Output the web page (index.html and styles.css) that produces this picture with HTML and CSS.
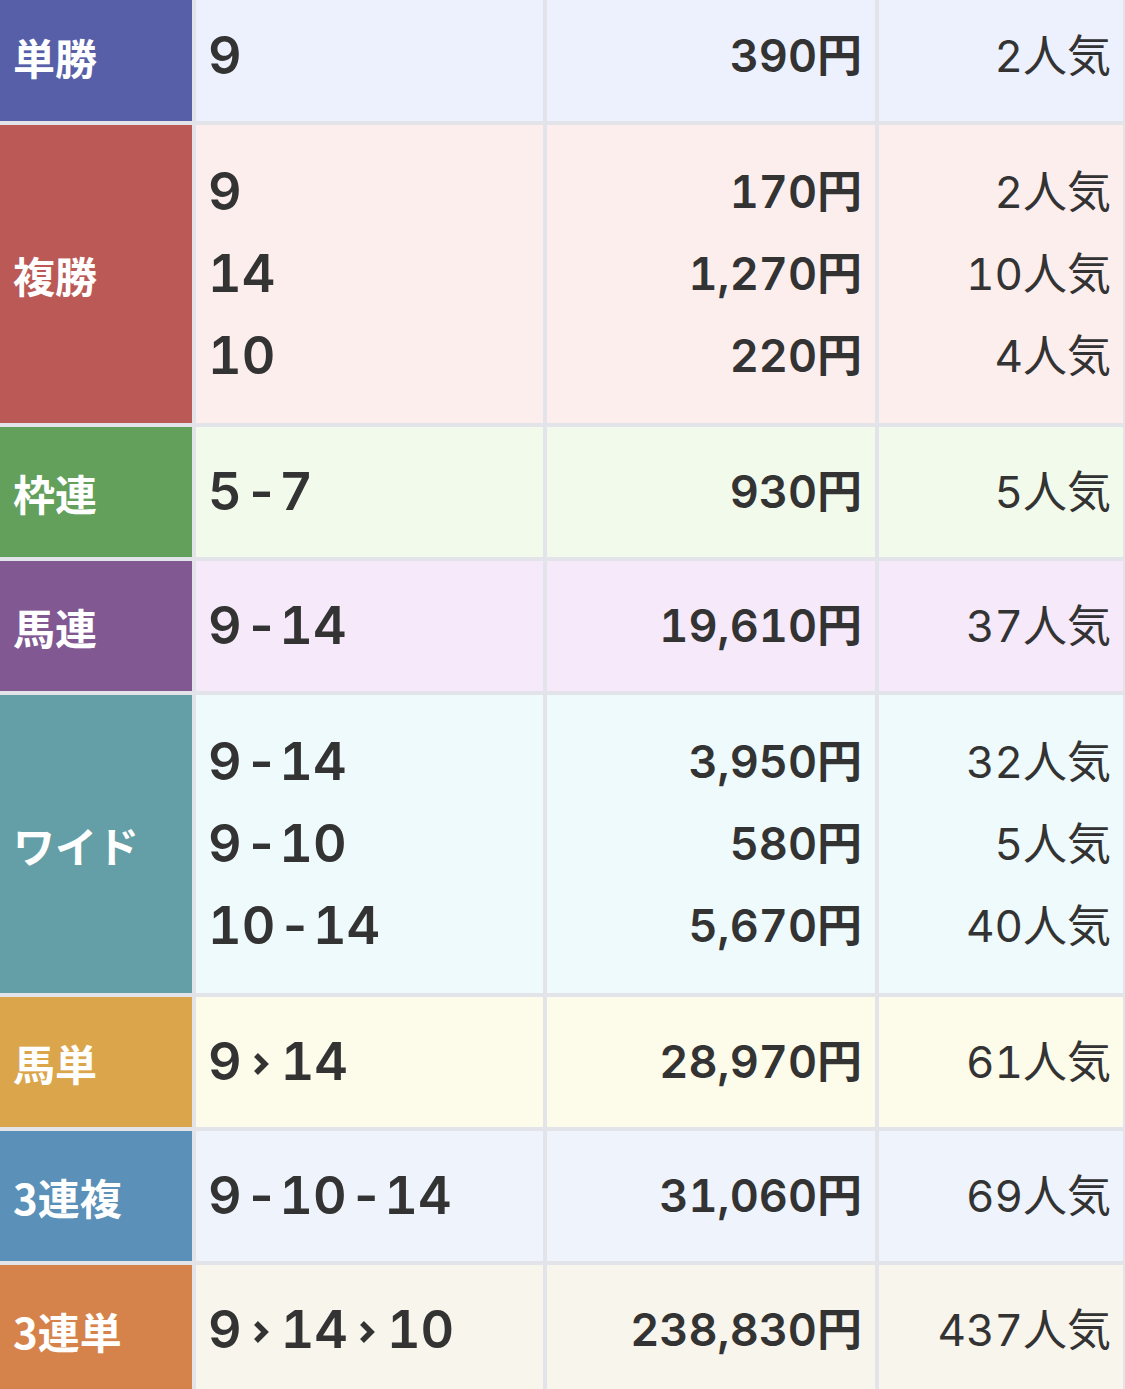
FILE: index.html
```html
<!DOCTYPE html>
<html lang="ja">
<head>
<meta charset="utf-8">
<title>払戻金</title>
<link rel="stylesheet" href="styles.css">
</head>
<body>
<div class="payout">
  <div class="row r-win">
    <div class="label">単勝</div>
    <div class="nums"><span>9</span></div>
    <div class="yen"><span>390円</span></div>
    <div class="pop"><span>2人気</span></div>
  </div>
  <div class="row r-place multi">
    <div class="label">複勝</div>
    <div class="nums"><span>9</span><span>14</span><span>10</span></div>
    <div class="yen"><span>170円</span><span>1,270円</span><span>220円</span></div>
    <div class="pop"><span>2人気</span><span>10人気</span><span>4人気</span></div>
  </div>
  <div class="row r-waku">
    <div class="label">枠連</div>
    <div class="nums"><span>5<b class="sep">-</b>7</span></div>
    <div class="yen"><span>930円</span></div>
    <div class="pop"><span>5人気</span></div>
  </div>
  <div class="row r-umaren">
    <div class="label">馬連</div>
    <div class="nums"><span>9<b class="sep">-</b>14</span></div>
    <div class="yen"><span>19,610円</span></div>
    <div class="pop"><span>37人気</span></div>
  </div>
  <div class="row r-wide multi">
    <div class="label">ワイド</div>
    <div class="nums"><span>9<b class="sep">-</b>14</span><span>9<b class="sep">-</b>10</span><span>10<b class="sep">-</b>14</span></div>
    <div class="yen"><span>3,950円</span><span>580円</span><span>5,670円</span></div>
    <div class="pop"><span>32人気</span><span>5人気</span><span>40人気</span></div>
  </div>
  <div class="row r-umatan">
    <div class="label">馬単</div>
    <div class="nums"><span>9<svg class="arr" viewBox="0 0 16 24" aria-hidden="true"><path d="M3 3 L12 12 L3 21"/></svg>14</span></div>
    <div class="yen"><span>28,970円</span></div>
    <div class="pop"><span>61人気</span></div>
  </div>
  <div class="row r-trio">
    <div class="label">3連複</div>
    <div class="nums"><span>9<b class="sep">-</b>10<b class="sep">-</b>14</span></div>
    <div class="yen"><span>31,060円</span></div>
    <div class="pop"><span>69人気</span></div>
  </div>
  <div class="row r-trifecta">
    <div class="label">3連単</div>
    <div class="nums"><span>9<svg class="arr" viewBox="0 0 16 24" aria-hidden="true"><path d="M3 3 L12 12 L3 21"/></svg>14<svg class="arr" viewBox="0 0 16 24" aria-hidden="true"><path d="M3 3 L12 12 L3 21"/></svg>10</span></div>
    <div class="yen"><span>238,830円</span></div>
    <div class="pop"><span>437人気</span></div>
  </div>
</div>
</body>
</html>
```
FILE: styles.css
```css
html, body {
  margin: 0;
  padding: 0;
  background: #e3e3ea;
  overflow: hidden;
}
body {
  font-family: "Noto Sans CJK JP", "Noto Sans", sans-serif;
  color: #333;
}
.payout {
  margin-top: -9px;
  display: flex;
  flex-direction: column;
  gap: 4px;
  background: #e3e3ea;
  padding-right: 3px;
}
.row {
  display: grid;
  grid-template-columns: 192px 347px 328px 244px;
  column-gap: 4px;
  height: 130px;
}
.row.multi {
  height: 298px;
}
.row > div {
  display: flex;
  flex-direction: column;
  justify-content: center;
}
.row > div > span {
  line-height: 82px;
  display: block;
  white-space: nowrap;
}
.label {
  color: #fff;
  font-weight: 700;
  font-size: 42px;
  padding-left: 13px;
}
.nums, .yen, .pop {
  font-family: "Inter", "Noto Sans CJK JP", sans-serif;
  font-variant-numeric: tabular-nums;
}
.nums {
  padding-left: 12px;
  font-size: 52px;
  font-weight: 600;
  letter-spacing: 0;
}
.sep {
  font-weight: 600;
  display: inline-block;
  margin: 0 1px 0 3px;
}
.arr {
  width: 16px;
  height: 24px;
  margin: 0 12px 0 11px;
  vertical-align: 4px;
  fill: none;
  stroke: #333;
  stroke-width: 5.5;
  stroke-linecap: butt;
  stroke-linejoin: miter;
}
.yen {
  align-items: flex-end;
  padding-right: 13px;
  font-size: 45px;
  font-weight: 600;
}
.pop {
  align-items: flex-end;
  padding-right: 12px;
  font-size: 44px;
  font-weight: 400;
}

.r-win .label { background: #565fa8; }
.r-win > div:not(.label) { background: #edf1fd; }
.r-place .label { background: #bb5956; }
.r-place > div:not(.label) { background: #fdeeee; }
.r-waku .label { background: #62a05c; }
.r-waku > div:not(.label) { background: #f2faec; }
.r-umaren .label { background: #815892; }
.r-umaren > div:not(.label) { background: #f5e9fa; }
.r-wide .label { background: #649ea6; }
.r-wide > div:not(.label) { background: #eefafb; }
.r-umatan .label { background: #dba64b; }
.r-umatan > div:not(.label) { background: #fdfbea; }
.r-trio .label { background: #5b90b8; }
.r-trio > div:not(.label) { background: #eef3fc; }
.r-trifecta .label { background: #d6834b; }
.r-trifecta > div:not(.label) { background: #f8f5ec; }
```
